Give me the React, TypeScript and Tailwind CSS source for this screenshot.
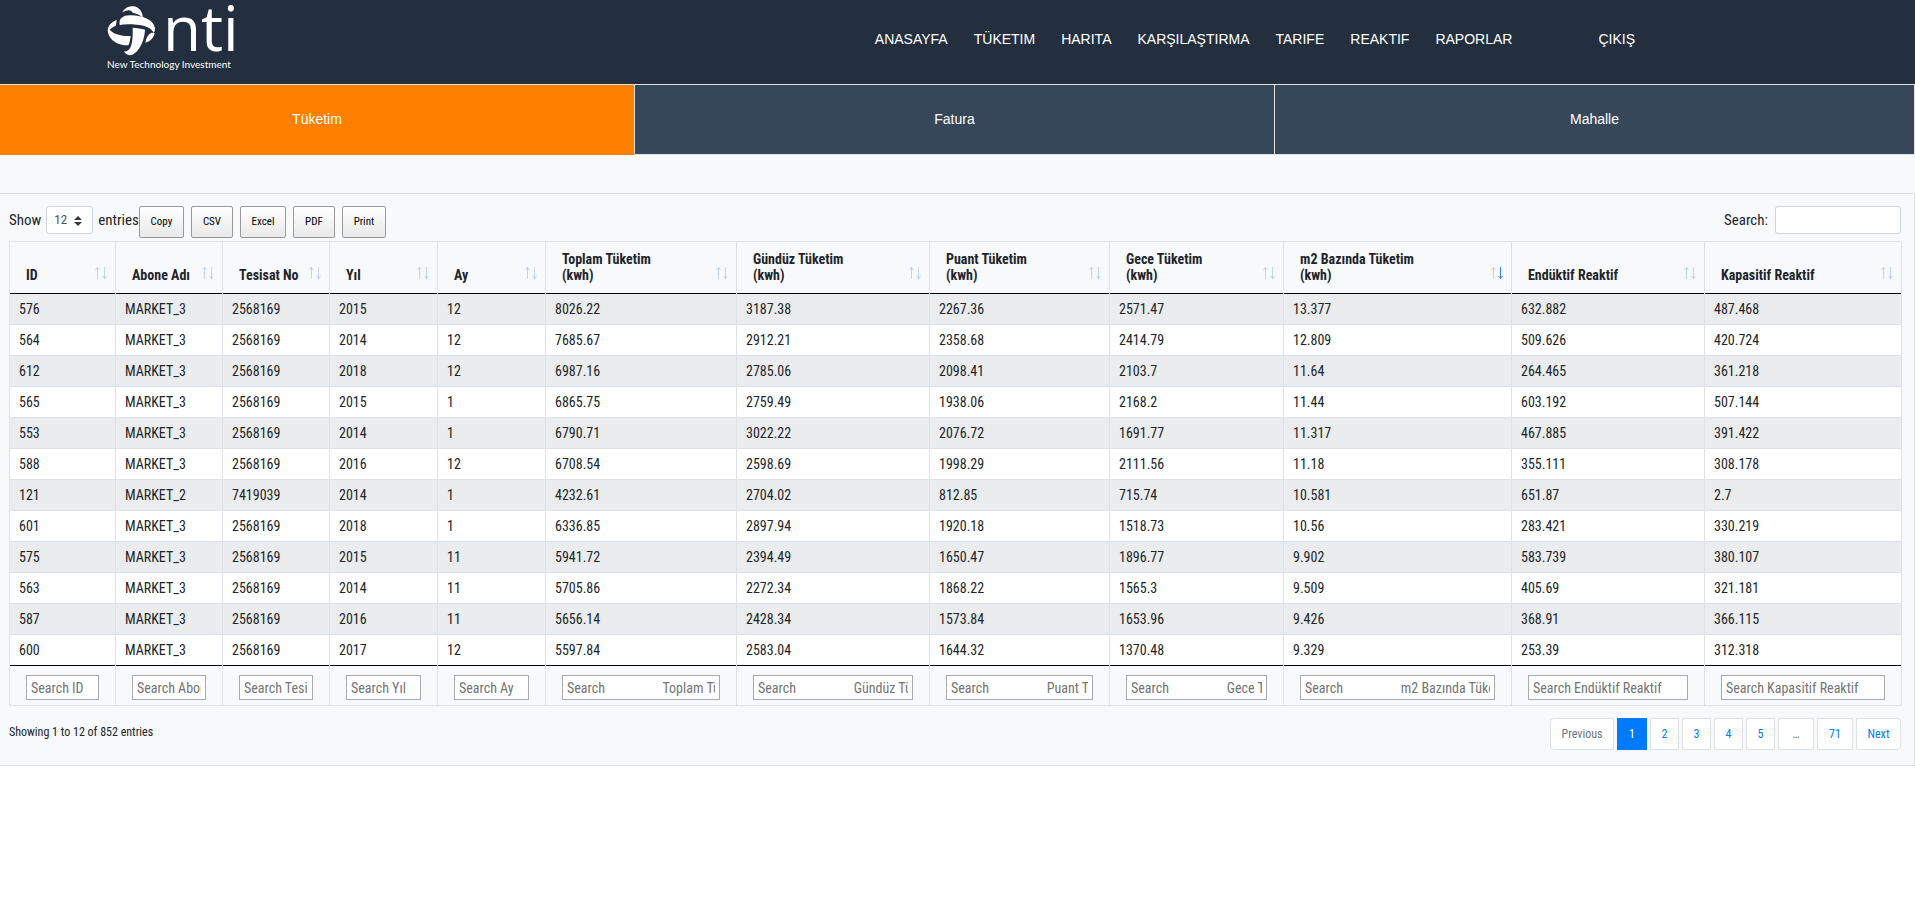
const columns = [
  { label: "ID", width: "w-[106px]" },
  { label: "Abone Adı", width: "w-[107px]" },
  { label: "Tesisat No", width: "w-[107px]" },
  { label: "Yıl", width: "w-[108px]" },
  { label: "Ay", width: "w-[108px]" },
  { label: "Toplam Tüketim", unit: "(kwh)", width: "w-[191px]" },
  { label: "Gündüz Tüketim", unit: "(kwh)", width: "w-[193px]" },
  { label: "Puant Tüketim", unit: "(kwh)", width: "w-[180px]" },
  { label: "Gece Tüketim", unit: "(kwh)", width: "w-[174px]" },
  { label: "m2 Bazında Tüketim", unit: "(kwh)", width: "w-[228px]", sorted: true },
  { label: "Endüktif Reaktif", width: "w-[193px]" },
  { label: "Kapasitif Reaktif", width: "w-[197px]" },
];

const rows = [
  ["576", "MARKET_3", "2568169", "2015", "12", "8026.22", "3187.38", "2267.36", "2571.47", "13.377", "632.882", "487.468"],
  ["564", "MARKET_3", "2568169", "2014", "12", "7685.67", "2912.21", "2358.68", "2414.79", "12.809", "509.626", "420.724"],
  ["612", "MARKET_3", "2568169", "2018", "12", "6987.16", "2785.06", "2098.41", "2103.7", "11.64", "264.465", "361.218"],
  ["565", "MARKET_3", "2568169", "2015", "1", "6865.75", "2759.49", "1938.06", "2168.2", "11.44", "603.192", "507.144"],
  ["553", "MARKET_3", "2568169", "2014", "1", "6790.71", "3022.22", "2076.72", "1691.77", "11.317", "467.885", "391.422"],
  ["588", "MARKET_3", "2568169", "2016", "12", "6708.54", "2598.69", "1998.29", "2111.56", "11.18", "355.111", "308.178"],
  ["121", "MARKET_2", "7419039", "2014", "1", "4232.61", "2704.02", "812.85", "715.74", "10.581", "651.87", "2.7"],
  ["601", "MARKET_3", "2568169", "2018", "1", "6336.85", "2897.94", "1920.18", "1518.73", "10.56", "283.421", "330.219"],
  ["575", "MARKET_3", "2568169", "2015", "11", "5941.72", "2394.49", "1650.47", "1896.77", "9.902", "583.739", "380.107"],
  ["563", "MARKET_3", "2568169", "2014", "11", "5705.86", "2272.34", "1868.22", "1565.3", "9.509", "405.69", "321.181"],
  ["587", "MARKET_3", "2568169", "2016", "11", "5656.14", "2428.34", "1573.84", "1653.96", "9.426", "368.91", "366.115"],
  ["600", "MARKET_3", "2568169", "2017", "12", "5597.84", "2583.04", "1644.32", "1370.48", "9.329", "253.39", "312.318"],
];

const nav = ["ANASAYFA", "TÜKETIM", "HARITA", "KARŞILAŞTIRMA", "TARIFE", "REAKTIF", "RAPORLAR"];
const exportButtons = [
  { label: "Copy", width: "w-[45px]" },
  { label: "CSV", width: "w-[42px]" },
  { label: "Excel", width: "w-[46px]" },
  { label: "PDF", width: "w-[42px]" },
  { label: "Print", width: "w-[44px]" },
];
const pages = [
  { label: "Previous", style: "w-16 rounded-l-[4px] text-[#6c757d] border-[#dee2e6] bg-white" },
  { label: "1", style: "w-[30px] text-white border-[#007bff] bg-[#007bff]" },
  { label: "2", style: "w-[29px] text-[#007bff] border-[#dee2e6] bg-white" },
  { label: "3", style: "w-[29px] text-[#007bff] border-[#dee2e6] bg-white" },
  { label: "4", style: "w-[29px] text-[#007bff] border-[#dee2e6] bg-white" },
  { label: "5", style: "w-[29px] text-[#007bff] border-[#dee2e6] bg-white" },
  { label: "…", style: "w-9 text-[#6c757d] border-[#dee2e6] bg-white" },
  { label: "71", style: "w-9 text-[#007bff] border-[#dee2e6] bg-white" },
  { label: "Next", style: "w-[45px] rounded-r-[4px] text-[#007bff] border-[#dee2e6] bg-white" },
];

function placeholder(label: string, unit?: string) {
  return unit ? "Search" + " ".repeat(18) + label : "Search " + label;
}

function Logo() {
  return (
    <svg width="130" height="74" viewBox="0 0 130 74" fill="#fff" className="overflow-visible" role="img" aria-label="nti New Technology Investment">
      <g transform="translate(-2 0) scale(0.3333)">
        <path d="M55 37C62 22 80 16 95 20C109 25 116 38 117 54C108 44 98 40 86 38C82 29 70 28 55 37Z" />
        <path d="M47 75C44 56 56 46 78 46C115 45 150 60 153 85C153 90 152 95 149 99C144 84 122 75 98 74C80 73 62 72 47 75Z" />
        <path d="M142 98L152 99C149 113 140 124 124 128C126 115 131 104 142 98Z" />
        <path d="M38 60C38 66 36 73 35 78C28 80 22 84 17 89C26 101 50 109 80 108C78 118 78 127 73 136C44 137 18 122 12 98C8 80 22 66 38 60Z" />
        <path d="M86 83C98 84 112 86 123 89C122 115 110 147 92 160C80 170 65 166 60 154C80 157 88 130 86 83Z" />
      </g>
      <text x="57" y="51" fontSize="62" fontFamily="Open Sans, Noto Sans, sans-serif">nti</text>
      <text x="1" y="68" fontSize="10" fontFamily="Lato, Open Sans, sans-serif">New Technology Investment</text>
    </svg>
  );
}

function SortArrows({ sorted }: { sorted?: boolean }) {
  return (
    <svg width="14" height="14" viewBox="0 0 14 14" fill="none" stroke="#3b7cff" className="mb-[3px] shrink-0" aria-hidden="true">
      <path d="M3.5 13V1.5M1.5 4L3.5 1.5L5.5 4" opacity="0.3" />
      <path d="M10.5 1V12.5M8.5 10L10.5 12.5L12.5 10" opacity={sorted ? 1 : 0.3} />
    </svg>
  );
}

export default function App() {
  return (
    <div className="min-h-screen bg-white font-['Roboto_Condensed','Liberation_Sans',sans-serif] text-[#212529]">
      <header className="flex h-[84px] items-start justify-between bg-[#232f3e] pr-[280px] pl-[106px]">
        <a href="#">
          <Logo />
        </a>
        <nav className="flex gap-[26px] pt-[29px] font-['Liberation_Sans',Arial,sans-serif] text-sm text-white">
          {nav.map((item) => (
            <a key={item} href="#">{item}</a>
          ))}
          <a href="#" className="ml-[60px]">ÇIKIŞ</a>
        </nav>
      </header>

      <div className="grid h-[71px] grid-cols-[635fr_640fr_640fr] border-t border-[#dee2e6] font-['Liberation_Sans',Arial,sans-serif] text-sm text-white">
        <a href="#" className="flex items-center justify-center border-r border-b border-r-[#dee2e6] border-b-[#ff8000] bg-[#ff8000] pb-[2px]">Tüketim</a>
        <a href="#" className="flex items-center justify-center border-r border-b border-[#dee2e6] bg-[#37475a] pb-[2px]">Fatura</a>
        <a href="#" className="flex items-center justify-center border-r border-b border-[#dee2e6] bg-[#37475a] pb-[2px]">Mahalle</a>
      </div>

      <main className="bg-[#f8f9fb] pt-[38px]">
        <div className="border-y border-r border-[#dcdfe2] pt-3 pr-[13px] pb-[15px] pl-[9px]">
          <div className="flex h-[35px] items-start justify-between text-[15px]">
            <div className="flex items-start">
              <label className="flex items-center">
                Show
                <span className="relative mx-[5px] inline-flex">
                  <select className="h-7 w-[47px] appearance-none rounded-[3px] border border-[#ced4da] bg-white pl-[7px] text-[13px] text-[#495057]">
                    <option>12</option>
                  </select>
                  <svg width="8" height="10" viewBox="0 0 8 10" fill="#343a40" className="pointer-events-none absolute top-[10px] right-[11px]">
                    <path d="M4 0L8 4H0ZM4 10L0 6H8Z" />
                  </svg>
                </span>
                entries
              </label>
              <div className="flex gap-[7px]">
                {exportButtons.map((b) => (
                  <button key={b.label} className={`h-8 rounded-[2px] border border-[#999] bg-linear-to-b from-white to-[#e9e9e9] text-[11px] text-black ${b.width}`}>
                    {b.label}
                  </button>
                ))}
              </div>
            </div>
            <label className="flex items-center gap-[7px]">
              Search:
              <input type="search" className="h-7 w-[126px] rounded-[3px] border border-[#ced4da] bg-white px-2 text-sm" />
            </label>
          </div>

          <table className="w-full table-fixed border-collapse border border-[#dee2e6] text-sm">
            <thead>
              <tr className="h-[52px] border-b border-b-black">
                {columns.map((c) => (
                  <th key={c.label} className={`border-x border-[#dee2e6] pr-[7px] pb-[10px] pl-4 text-left align-bottom leading-4 ${c.width}`}>
                    <div className="flex items-end justify-between">
                      <span className="whitespace-nowrap">
                        {c.label}
                        {c.unit && <><br />{c.unit}</>}
                      </span>
                      <SortArrows sorted={c.sorted} />
                    </div>
                  </th>
                ))}
              </tr>
            </thead>
            <tbody>
              {rows.map((row) => (
                <tr key={row[0]} className="h-[31px] border-b border-[#dee2e6] bg-white odd:bg-[#ebecee] last:border-b-black">
                  {row.map((cell, i) => (
                    <td key={i} className="border-x border-[#dee2e6] pr-2 pl-[9px]">{cell}</td>
                  ))}
                </tr>
              ))}
            </tbody>
            <tfoot>
              <tr className="h-10">
                {columns.map((c) => (
                  <th key={c.label} className="border-x border-[#dee2e6] px-4 pt-1 text-left font-normal">
                    <input
                      type="text"
                      aria-label={`Search ${c.label}`}
                      placeholder={placeholder(c.label, c.unit)}
                      className="block h-[25px] w-full border border-[#a9a9a9] bg-white px-1 placeholder:text-[#757575]"
                    />
                  </th>
                ))}
              </tr>
            </tfoot>
          </table>

          <div className="flex items-start justify-between pt-3 text-xs">
            <p className="pt-[6px]">Showing 1 to 12 of 852 entries</p>
            <nav className="flex gap-[3px]">
              {pages.map((p) => (
                <button key={p.label} className={`h-8 border ${p.style}`}>{p.label}</button>
              ))}
            </nav>
          </div>
        </div>
      </main>
    </div>
  );
}
